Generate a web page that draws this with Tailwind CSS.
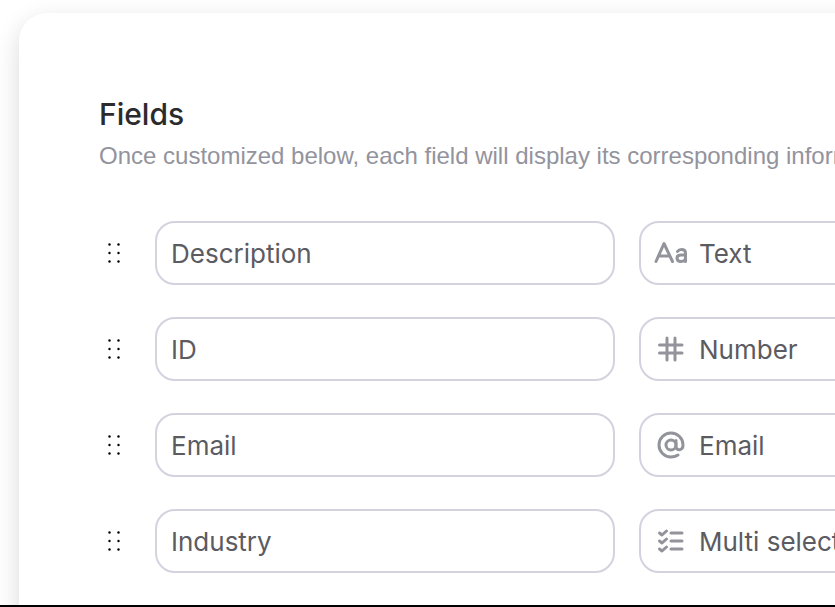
<!DOCTYPE html>
<html lang="en">
<head>
<meta charset="utf-8">
<meta name="viewport" content="width=device-width, initial-scale=1">
<title>Fields</title>
<script src="https://cdn.jsdelivr.net/npm/@tailwindcss/browser@4"></script>
</head>
<body class="flex h-screen flex-col overflow-hidden bg-white font-['Inter',sans-serif]">
<main class="min-h-0 flex-1 overflow-hidden pt-[13px] pl-[19px]">
  <section class="min-h-full w-max rounded-tl-[28px] bg-white px-20 pt-[83px] pb-20 shadow-[0_8px_24px_rgba(0,0,0,0.15)]">
    <h1 class="text-[30px] leading-9 font-medium text-[#2b2b2d]">Fields</h1>
    <p class="mt-2 font-['Liberation_Sans',sans-serif] text-[24px] leading-8 whitespace-nowrap text-[#93939d]">Once customized below, each field will display its corresponding information.</p>
    <ul class="mt-[49px] flex flex-col gap-8">
      <li class="flex items-center">
        <button type="button" aria-label="Reorder Description" class="mr-6 flex h-8 w-8 items-center justify-center">
          <svg class="h-6 w-6" viewBox="0 0 24 24" fill="#000"><g><circle cx="6.500" cy="3.500" r="1.200"/><circle cx="15.500" cy="3.500" r="1.200"/><circle cx="6.500" cy="12" r="1.200"/><circle cx="15.500" cy="12" r="1.200"/><circle cx="6.500" cy="20.500" r="1.200"/><circle cx="15.500" cy="20.500" r="1.200"/></g></svg>
        </button>
        <input type="text" aria-label="Field name" value="Description" class="mr-6 h-16 w-[460px] rounded-[20px] border-2 border-[#d3d3e0] bg-white px-3.5 text-[26px] text-[#5b5b61] outline-none">
        <div class="relative">
          <svg class="pointer-events-none absolute top-4 left-3.5 h-8 w-9" viewBox="0 0 36 32" fill="none" stroke="#93939b" stroke-width="3" stroke-linecap="round" stroke-linejoin="round"><path d="M3 24.500 11 6.500l8.500 18M6 19h10.500"/><path d="M24.500 14.500c1-1.500 2.500-2 4-2 2.500 0 4 1.500 4 3.500v8.500M32.500 18h-4.500c-2.500 0-4 1-4 3s1.500 3.500 4 3.500 4.500-1.500 4.500-4"/></svg>
          <select aria-label="Field type" class="h-16 w-[460px] appearance-none rounded-[20px] border-2 border-[#d3d3e0] bg-transparent pr-4 pl-[58px] text-[26px] text-[#5b5b61]"><option>Text</option></select>
        </div>
      </li>
      <li class="flex items-center">
        <button type="button" aria-label="Reorder ID" class="mr-6 flex h-8 w-8 items-center justify-center">
          <svg class="h-6 w-6" viewBox="0 0 24 24" fill="#000"><g><circle cx="6.500" cy="3.500" r="1.200"/><circle cx="15.500" cy="3.500" r="1.200"/><circle cx="6.500" cy="12" r="1.200"/><circle cx="15.500" cy="12" r="1.200"/><circle cx="6.500" cy="20.500" r="1.200"/><circle cx="15.500" cy="20.500" r="1.200"/></g></svg>
        </button>
        <input type="text" aria-label="Field name" value="ID" class="mr-6 h-16 w-[460px] rounded-[20px] border-2 border-[#d3d3e0] bg-white px-3.5 text-[26px] text-[#5b5b61] outline-none">
        <div class="relative">
          <svg class="pointer-events-none absolute top-4 left-3.5 h-8 w-9" viewBox="0 0 36 32" fill="none" stroke="#93939b" stroke-width="3" stroke-linecap="round"><path d="M14 5v22M22 5v22M6.500 12h22.500M6.500 20h22.500"/></svg>
          <select aria-label="Field type" class="h-16 w-[460px] appearance-none rounded-[20px] border-2 border-[#d3d3e0] bg-transparent pr-4 pl-[58px] text-[26px] text-[#5b5b61]"><option>Number</option></select>
        </div>
      </li>
      <li class="flex items-center">
        <button type="button" aria-label="Reorder Email" class="mr-6 flex h-8 w-8 items-center justify-center">
          <svg class="h-6 w-6" viewBox="0 0 24 24" fill="#000"><g><circle cx="6.500" cy="3.500" r="1.200"/><circle cx="15.500" cy="3.500" r="1.200"/><circle cx="6.500" cy="12" r="1.200"/><circle cx="15.500" cy="12" r="1.200"/><circle cx="6.500" cy="20.500" r="1.200"/><circle cx="15.500" cy="20.500" r="1.200"/></g></svg>
        </button>
        <input type="text" aria-label="Field name" value="Email" class="mr-6 h-16 w-[460px] rounded-[20px] border-2 border-[#d3d3e0] bg-white px-3.5 text-[26px] text-[#5b5b61] outline-none">
        <div class="relative">
          <svg class="pointer-events-none absolute top-4 left-3.5 h-8 w-9" viewBox="0 0 36 32" fill="none" stroke="#93939b" stroke-width="3" stroke-linecap="round" stroke-linejoin="round"><circle cx="18" cy="16" r="5"/><path d="M23 11.500v6c0 4.500 7 4.500 7-1.500A12 12 0 1 0 18 28c2.800 0 5-.7 7-2"/></svg>
          <select aria-label="Field type" class="h-16 w-[460px] appearance-none rounded-[20px] border-2 border-[#d3d3e0] bg-transparent pr-4 pl-[58px] text-[26px] text-[#5b5b61]"><option>Email</option></select>
        </div>
      </li>
      <li class="flex items-center">
        <button type="button" aria-label="Reorder Industry" class="mr-6 flex h-8 w-8 items-center justify-center">
          <svg class="h-6 w-6" viewBox="0 0 24 24" fill="#000"><g><circle cx="6.500" cy="3.500" r="1.200"/><circle cx="15.500" cy="3.500" r="1.200"/><circle cx="6.500" cy="12" r="1.200"/><circle cx="15.500" cy="12" r="1.200"/><circle cx="6.500" cy="20.500" r="1.200"/><circle cx="15.500" cy="20.500" r="1.200"/></g></svg>
        </button>
        <input type="text" aria-label="Field name" value="Industry" class="mr-6 h-16 w-[460px] rounded-[20px] border-2 border-[#d3d3e0] bg-white px-3.5 text-[26px] text-[#5b5b61] outline-none">
        <div class="relative">
          <svg class="pointer-events-none absolute top-4 left-3.5 h-8 w-9" viewBox="0 0 36 32" fill="none" stroke="#93939b" stroke-width="3" stroke-linecap="round" stroke-linejoin="round"><path d="M18 8h11M18 16h11M18 24h11M6.500 8l2.500 2 4.500-4M6.500 16l2.500 2 4.500-4M6.500 24l2.500 2 4.500-4"/></svg>
          <select aria-label="Field type" class="h-16 w-[460px] appearance-none rounded-[20px] border-2 border-[#d3d3e0] bg-transparent pr-4 pl-[58px] text-[26px] text-[#5b5b61]"><option>Multi select</option></select>
        </div>
      </li>
    </ul>
  </section>
</main>
<footer class="h-0.5 shrink-0 bg-black"></footer>
</body>
</html>
